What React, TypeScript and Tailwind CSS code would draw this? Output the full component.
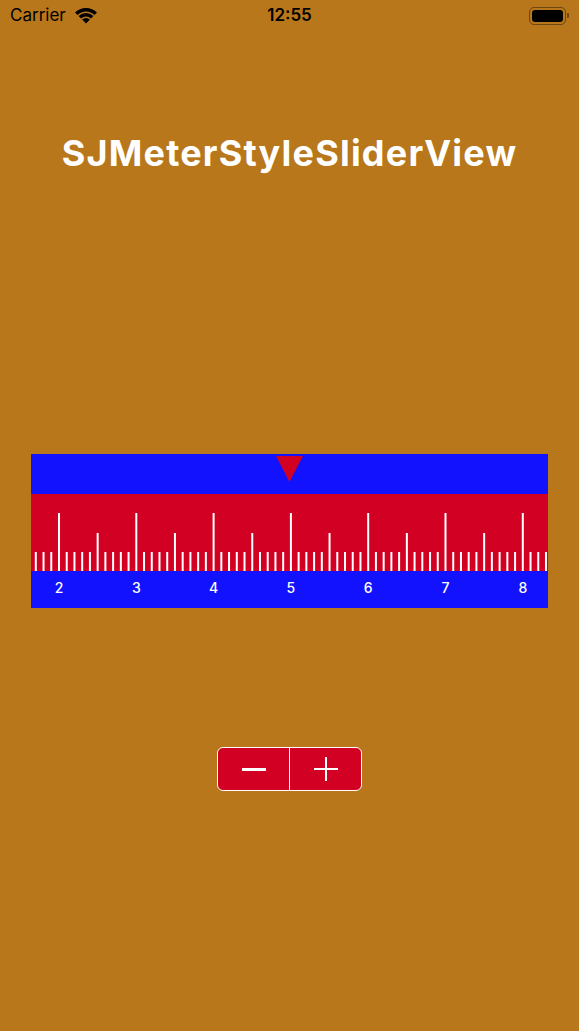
import React from "react";

const SCALE = 77.3; // px per unit
const ORIGIN = 28; // x of value 2 inside ruler
const toX = (v: number) => ORIGIN + (v - 2) * SCALE;

const ticks = Array.from({ length: 67 }, (_, i) => 17 + i); // tenths 1.7 .. 8.3
const labels = [2, 3, 4, 5, 6, 7, 8];

// wifi fan bands, centre (11, 15.5), ±45°
const band = (r1: number, r2: number) => {
  const k = 0.7071;
  const cx = 11;
  const cy = 15.5;
  if (r2 === 0) {
    return `M${cx - r1 * k} ${cy - r1 * k} A${r1} ${r1} 0 0 1 ${cx + r1 * k} ${cy - r1 * k} L${cx} ${cy} Z`;
  }
  return `M${cx - r1 * k} ${cy - r1 * k} A${r1} ${r1} 0 0 1 ${cx + r1 * k} ${cy - r1 * k} L${cx + r2 * k} ${cy - r2 * k} A${r2} ${r2} 0 0 0 ${cx - r2 * k} ${cy - r2 * k} Z`;
};

const StatusBar = () => (
  <div className="flex h-[31px] items-center justify-between px-[10px] text-black">
    <div className="flex w-[150px] items-center gap-[9px]">
      <span className="text-[17px] leading-none">Carrier</span>
      <svg width="22" height="16" viewBox="0 0 22 16">
        <path d={band(15.5, 12)} fill="#000" />
        <path d={band(10.5, 7)} fill="#000" />
        <path d={band(5.5, 0)} fill="#000" />
      </svg>
    </div>
    <span className="text-[17px] font-semibold leading-none">12:55</span>
    <div className="flex w-[150px] items-center justify-end">
      <div className="flex h-[18px] w-[37px] items-center rounded-[5px] border border-black/40 p-[2px]">
        <div className="h-full w-full rounded-[3px] bg-black" />
      </div>
      <div className="ml-[1px] h-[5px] w-[2px] rounded-r-[1px] bg-black/40" />
    </div>
  </div>
);

const Ruler = () => (
  <div className="mx-[31px] flex flex-col">
    <div className="relative h-[40px] bg-[#1212ff]">
      <svg className="absolute left-0 top-0" width="517" height="40">
        <polygon points="245,2 272,2 258.5,28" fill="#d20022" />
      </svg>
    </div>
    <div className="relative h-[77px] bg-[#d20022]">
      <svg className="absolute left-0 top-0" width="517" height="77">
        {ticks.map((t) => {
          const h = t % 10 === 0 ? 58 : t % 5 === 0 ? 38 : 19;
          return <rect key={t} x={toX(t / 10) - 1} y={77 - h} width={2} height={h} fill="#fff" />;
        })}
      </svg>
    </div>
    <div className="relative h-[37px] bg-[#1212ff]">
      {labels.map((n) => (
        <span
          key={n}
          className="absolute top-[8px] w-[30px] -translate-x-1/2 text-center text-[14px] font-medium leading-[17px] text-white"
          style={{ left: toX(n) }}
        >
          {n}
        </span>
      ))}
    </div>
  </div>
);

const Stepper = () => (
  <div className="mx-auto mt-[139px] flex h-[44px] w-[145px] overflow-hidden rounded-[6px] border border-white bg-[#d20022]">
    <button className="flex flex-1 items-center justify-center">
      <div className="h-[3px] w-[24px] bg-white" />
    </button>
    <div className="w-px bg-white" />
    <button className="relative flex flex-1 items-center justify-center">
      <div className="h-[2px] w-[24px] bg-white" />
      <div className="absolute h-[24px] w-[2px] bg-white" />
    </button>
  </div>
);

export default function App() {
  return (
    <div
      className="h-[1031px] w-[579px] overflow-hidden bg-[#b8771a]"
      style={{ fontFamily: "Inter, 'Noto Sans', sans-serif" }}
    >
      <StatusBar />
      <h1 className="mt-[102px] text-center text-[36px] font-bold leading-[41px] tracking-[1.2px] text-white">
        SJMeterStyleSliderView
      </h1>
      <div className="mt-[280px]">
        <Ruler />
      </div>
      <Stepper />
    </div>
  );
}
